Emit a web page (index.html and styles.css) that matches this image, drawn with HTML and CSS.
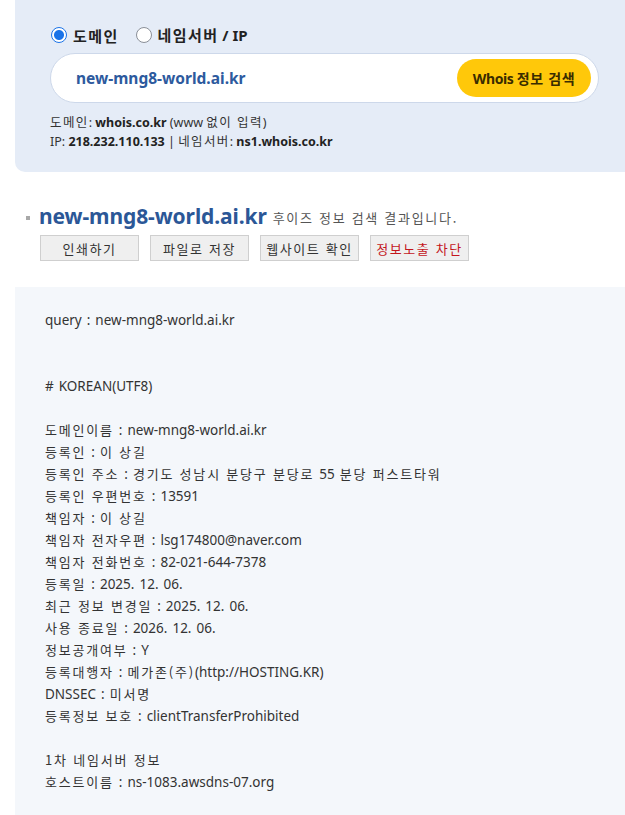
FILE: index.html
```html
<!DOCTYPE html>
<html lang="ko">
<head>
<meta charset="utf-8">
<title>Whois</title>
<link rel="stylesheet" href="styles.css">
</head>
<body>
<section class="search-panel">
  <div class="radios">
    <label class="radio"><span class="dot checked"></span><span class="k">도메인</span></label>
    <label class="radio"><span class="dot"></span><span><span class="k">네임서버</span> / IP</span></label>
  </div>
  <div class="search-box">
    <span class="query">new-mng8-world.ai.kr</span>
    <button class="search-btn">Whois <span class="k">정보 검색</span></button>
  </div>
  <div class="help">
    <p><span class="k">도메인</span>: <b>whois.co.kr</b> (www <span class="k">없이 입력</span>)</p>
    <p>IP: <b>218.232.110.133</b> | <span class="k">네임서버</span>: <b>ns1.whois.co.kr</b></p>
  </div>
</section>

<section class="result-head">
  <h1 class="title"><span class="bullet"></span><span class="domain">new-mng8-world.ai.kr</span><span class="sub">후이즈 정보 검색 결과입니다.</span></h1>
  <div class="actions">
    <button class="act">인쇄하기</button>
    <button class="act">파일로 저장</button>
    <button class="act">웹사이트 확인</button>
    <button class="act red">정보노출 차단</button>
  </div>
</section>

<section class="result-box">
<div class="raw">query : new-mng8-world.ai.kr


# KOREAN(UTF8)

<span class="k">도메인이름</span> : new-mng8-world.ai.kr
<span class="k">등록인</span> : <span class="k">이 상길</span>
<span class="k">등록인 주소</span> : <span class="k">경기도 성남시 분당구 분당로</span> 55 <span class="k">분당 퍼스트타워</span>
<span class="k">등록인 우편번호</span> : 13591
<span class="k">책임자</span> : <span class="k">이 상길</span>
<span class="k">책임자 전자우편</span> : lsg174800@naver.com
<span class="k">책임자 전화번호</span> : 82-021-644-7378
<span class="k">등록일</span> : 2025. 12. 06.
<span class="k">최근 정보 변경일</span> : 2025. 12. 06.
<span class="k">사용 종료일</span> : 2026. 12. 06.
<span class="k">정보공개여부</span> : Y
<span class="k">등록대행자</span> : <span class="k">메가존(주)</span>(http://HOSTING.KR)
DNSSEC : <span class="k">미서명</span>
<span class="k">등록정보 보호</span> : clientTransferProhibited

<span class="k">1차 네임서버 정보</span>
<span class="k">호스트이름</span> : ns-1083.awsdns-07.org</div>
</section>
</body>
</html>
```

FILE: styles.css
```css
html, body {
  margin: 0;
  padding: 0;
  background: #ffffff;
  overflow: hidden;
}
body {
  font-family: "Noto Sans", "Noto Sans CJK KR", sans-serif;
  color: #333;
}
p { margin: 0; }
button { font-family: inherit; }
.k {
  font-family: "Noto Sans CJK KR", sans-serif;
  line-height: 1;
}

.search-panel {
  margin-left: 15px;
  background: #e5ecf7;
  border-radius: 0 0 0 10px;
  padding: 22px 26px 21px 35px;
}
.radios {
  display: flex;
  align-items: center;
  height: 26px;
  gap: 16px;
}
.radio {
  display: flex;
  align-items: center;
  gap: 6px;
  font-weight: 700;
  font-size: 15px;
  color: #222;
}
.radio .k { letter-spacing: 1.4px; }
.dot {
  width: 14px;
  height: 14px;
  border-radius: 50%;
  border: 1px solid #8a8f98;
  background: #fff;
  margin-left: 1px;
}
.dot.checked {
  border-color: #1a73e8;
  background: radial-gradient(circle, #1a73e8 0 4.5px, #fff 5.5px);
}

.search-box {
  margin-top: 5px;
  height: 48px;
  border: 1px solid #cdd8ea;
  border-radius: 25px;
  background: #fff;
  display: flex;
  align-items: center;
  justify-content: space-between;
  padding: 0 7px 0 25px;
}
.query {
  font-weight: 700;
  font-size: 15.5px;
  color: #2d5a9e;
}
.search-btn {
  height: 38px;
  width: 134px;
  border: none;
  border-radius: 19px;
  background: #ffc80a;
  color: #3a2c00;
  font-weight: 700;
  font-size: 14px;
  letter-spacing: -0.4px;
  padding: 0;
}
.search-btn .k { letter-spacing: 0.6px; }

.help {
  margin-top: 10px;
  font-size: 12.5px;
  line-height: 19px;
  color: #333;
}
.help .k { letter-spacing: 1.4px; }
.help b { color: #222; }

.result-head {
  padding: 31px 0 0 26px;
}
.title {
  margin: 0;
  display: flex;
  align-items: center;
  height: 26px;
  font-weight: 400;
}
.bullet {
  width: 4px;
  height: 4px;
  background: #a8a8a8;
  margin-right: 9px;
  margin-top: 3px;
}
.domain {
  font-size: 21px;
  font-weight: 700;
  color: #2b5797;
  letter-spacing: -0.1px;
}
.sub {
  margin-left: 6px;
  margin-top: 3px;
  font-family: "Noto Sans CJK KR", sans-serif;
  font-size: 13px;
  letter-spacing: 1.7px;
  color: #555;
}
.actions {
  margin: 6px 0 0 14px;
  display: flex;
  gap: 11px;
}
.act {
  width: 99px;
  height: 26px;
  padding: 0;
  background: #efefef;
  border: 1px solid #cfcfcf;
  font-family: "Noto Sans CJK KR", sans-serif;
  font-size: 13px;
  letter-spacing: 1.6px;
  color: #333;
}
.act.red { color: #c4161c; }

.result-box {
  margin: 26px 0 0 15px;
  background: #f4f7fb;
  padding: 22px 30px 30px;
}
.raw {
  white-space: pre-line;
  font-size: 13.5px;
  line-height: 22px;
  word-spacing: 1.5px;
  color: #333;
}
.raw .k {
  font-size: 13px;
  letter-spacing: 1.8px;
  word-spacing: 0;
}
```
